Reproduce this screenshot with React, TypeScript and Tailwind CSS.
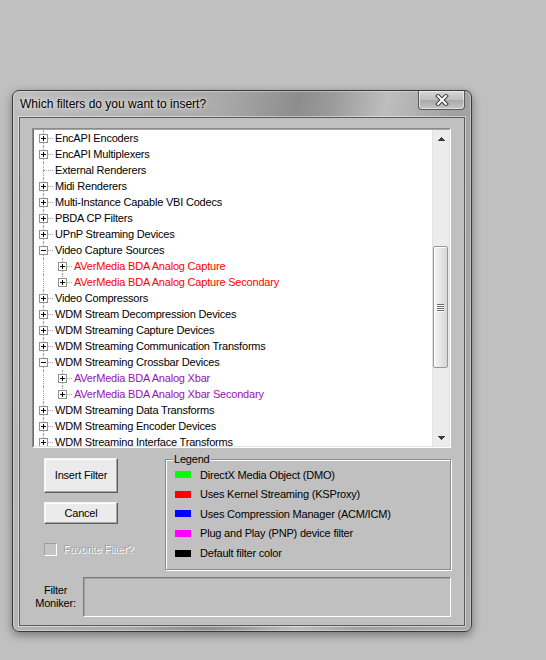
import React from "react";

type Box = "+" | "-" | null;
type Row = { label: string; level: 0 | 1; box: Box; color?: string; last?: boolean };

const rows: Row[] = [
  { label: "EncAPI Encoders", level: 0, box: "+" },
  { label: "EncAPI Multiplexers", level: 0, box: "+" },
  { label: "External Renderers", level: 0, box: null },
  { label: "Midi Renderers", level: 0, box: "+" },
  { label: "Multi-Instance Capable VBI Codecs", level: 0, box: "+" },
  { label: "PBDA CP Filters", level: 0, box: "+" },
  { label: "UPnP Streaming Devices", level: 0, box: "+" },
  { label: "Video Capture Sources", level: 0, box: "-" },
  { label: "AVerMedia BDA Analog Capture", level: 1, box: "+", color: "red" },
  { label: "AVerMedia BDA Analog Capture Secondary", level: 1, box: "+", color: "red", last: true },
  { label: "Video Compressors", level: 0, box: "+" },
  { label: "WDM Stream Decompression Devices", level: 0, box: "+" },
  { label: "WDM Streaming Capture Devices", level: 0, box: "+" },
  { label: "WDM Streaming Communication Transforms", level: 0, box: "+" },
  { label: "WDM Streaming Crossbar Devices", level: 0, box: "-" },
  { label: "AVerMedia BDA Analog Xbar", level: 1, box: "+", color: "purple" },
  { label: "AVerMedia BDA Analog Xbar Secondary", level: 1, box: "+", color: "purple", last: true },
  { label: "WDM Streaming Data Transforms", level: 0, box: "+" },
  { label: "WDM Streaming Encoder Devices", level: 0, box: "+" },
  { label: "WDM Streaming Interface Transforms", level: 0, box: "+" },
];

function ExpandBox({ kind }: { kind: "+" | "-" }) {
  return (
    <svg className="absolute left-[5px] top-[4px]" width="9" height="9" viewBox="0 0 9 9" shapeRendering="crispEdges">
      <rect x="0.5" y="0.5" width="8" height="8" fill="#fff" stroke="#919191" />
      <line x1="2" y1="4.5" x2="7" y2="4.5" stroke="#000" />
      {kind === "+" && <line x1="4.5" y1="2" x2="4.5" y2="7" stroke="#000" />}
    </svg>
  );
}

function Cell({ v, h, box }: { v: "full" | "top" | "none"; h: boolean; box: Box }) {
  return (
    <div className="relative h-[16px] w-[19px] shrink-0">
      {v === "full" && <div className="absolute left-[9px] top-0 h-[16px] border-l border-dotted border-[#a0a0a0]" />}
      {v === "top" && <div className="absolute left-[9px] top-0 h-[9px] border-l border-dotted border-[#a0a0a0]" />}
      {h && <div className="absolute left-[9px] top-[8px] w-[10px] border-t border-dotted border-[#a0a0a0]" />}
      {box && <ExpandBox kind={box} />}
    </div>
  );
}

function TreeRow({ r }: { r: Row }) {
  const color = r.color === "red" ? "text-[#ff0000]" : r.color === "purple" ? "text-[#9a10b4]" : "text-black";
  return (
    <div className="flex h-[16px] shrink-0 items-center whitespace-nowrap">
      {r.level === 0 ? (
        <Cell v="full" h box={r.box} />
      ) : (
        <>
          <Cell v="full" h={false} box={null} />
          <Cell v={r.last ? "top" : "full"} h box={r.box} />
        </>
      )}
      <span className={`ml-[2px] leading-[16px] ${color}`}>{r.label}</span>
    </div>
  );
}

function Scrollbar() {
  return (
    <div className="flex w-[17px] shrink-0 flex-col border-l border-[#e2e2e2] bg-[#ececec]">
      <div className="flex h-[17px] items-center justify-center">
        <svg width="7" height="4" viewBox="0 0 7 4" shapeRendering="crispEdges">
          <path d="M3.5 0 L7 4 L0 4 Z" fill="#3c3c3c" />
        </svg>
      </div>
      <div className="flex-1">
        <div className="mr-[1px] mt-[99px] flex h-[122px] flex-col items-center justify-center gap-[1px] rounded-[2px] border border-[#979797] bg-[linear-gradient(90deg,#f6f6f6,#e6e6e6_50%,#d6d6d6)] shadow-[inset_1px_1px_0_#fff]">
          <div className="h-[1px] w-[7px] bg-[#6a6a6a] shadow-[0_1px_0_#fff]" />
          <div className="h-[1px] w-[7px] bg-[#6a6a6a] shadow-[0_1px_0_#fff]" />
          <div className="h-[1px] w-[7px] bg-[#6a6a6a] shadow-[0_1px_0_#fff]" />
          <div className="h-[1px] w-[7px] bg-[#6a6a6a] shadow-[0_1px_0_#fff]" />
        </div>
      </div>
      <div className="flex h-[17px] items-center justify-center">
        <svg width="7" height="4" viewBox="0 0 7 4" shapeRendering="crispEdges">
          <path d="M0 0 L7 0 L3.5 4 Z" fill="#3c3c3c" />
        </svg>
      </div>
    </div>
  );
}

const legend = [
  { c: "bg-[#00ff00]", t: "DirectX Media Object (DMO)" },
  { c: "bg-[#ff0000]", t: "Uses Kernel Streaming (KSProxy)" },
  { c: "bg-[#0000ff]", t: "Uses Compression Manager (ACM/ICM)" },
  { c: "bg-[#ff00ff]", t: "Plug and Play (PNP) device filter" },
  { c: "bg-[#000000]", t: "Default filter color" },
];

export default function App() {
  return (
    <div className="h-[660px] w-[546px] overflow-hidden bg-[#c0c0c0] pl-[12px] pt-[90px] font-['Liberation_Sans',Arial,sans-serif] text-[11px] tracking-[-0.2px] text-black">
      <div className="flex h-[542px] w-[460px] flex-col rounded-[7px] border border-[#3a3a3a] bg-[linear-gradient(100deg,#bdbdbd_0%,#aaaaaa_38%,#8d8d8d_52%,#9b9b9b_58%,#bebebe_68%,#a1a1a1_80%,#ababab_100%)] shadow-[0_3px_10px_rgba(0,0,0,0.4),inset_0_0_0_1px_rgba(255,255,255,0.35)]">
        {/* title bar */}
        <div className="flex h-[26px] shrink-0 items-start justify-between pl-[7px] pr-[6px]">
          <div className="mt-[6px] text-[12px] leading-[15px] tracking-normal text-black [text-shadow:0_0_8px_rgba(255,255,255,0.9),0_0_3px_rgba(255,255,255,0.7)]">
            Which filters do you want to insert?
          </div>
          <div className="flex h-[19px] w-[47px] items-center justify-center rounded-b-[4px] border border-t-0 border-[#5a5a5a] bg-[linear-gradient(180deg,#d6d6d6,#bdbdbd_50%,#a9a9a9_51%,#c4c4c4)] shadow-[inset_0_0_0_1px_rgba(255,255,255,0.5)]">
            <svg width="14" height="12" viewBox="0 0 14 12">
              <path d="M3 2 L11 10 M11 2 L3 10" stroke="#3b3b3b" strokeWidth="4" strokeLinecap="square" />
              <path d="M3 2 L11 10 M11 2 L3 10" stroke="#ffffff" strokeWidth="2" strokeLinecap="square" />
            </svg>
          </div>
        </div>

        {/* client area */}
        <div className="mx-[6px] mb-[5px] flex flex-1 flex-col border border-[#5c5c5c] bg-[#c0c0c0] shadow-[0_0_0_1px_rgba(255,255,255,0.45)]">
          {/* tree view */}
          <div className="ml-[12px] mt-[10px] h-[320px] w-[419px] border border-b-white border-l-[#8a8a8a] border-r-white border-t-[#8a8a8a]">
            <div className="flex h-full w-full border border-b-[#e4e4e4] border-l-[#6c6c6c] border-r-[#e4e4e4] border-t-[#a6a6a6] bg-white">
              <div className="flex flex-1 flex-col overflow-hidden">
                {rows.map((r, i) => (
                  <TreeRow key={i} r={r} />
                ))}
              </div>
              <Scrollbar />
            </div>
          </div>

          {/* buttons + legend */}
          <div className="mt-[10px] flex pl-[24px]">
            <div className="flex w-[74px] flex-col">
              <button className="flex h-[35px] w-[74px] items-center justify-center border border-b-[#5e5e5e] border-l-[#f4f4f4] border-r-[#5e5e5e] border-t-[#f4f4f4] bg-[#ebebeb] text-[11px] text-black shadow-[inset_-1px_-1px_0_#a6a6a6,inset_1px_1px_0_#ffffff]">
                Insert Filter
              </button>
              <button className="mt-[9px] flex h-[22px] w-[74px] items-center justify-center border border-b-[#5e5e5e] border-l-[#f4f4f4] border-r-[#5e5e5e] border-t-[#f4f4f4] bg-[#ebebeb] text-[11px] text-black shadow-[inset_-1px_-1px_0_#a6a6a6,inset_1px_1px_0_#ffffff]">
                Cancel
              </button>
              <div className="mt-[17px] flex items-center whitespace-nowrap">
                <div className="h-[13px] w-[13px] shrink-0 border border-b-white border-l-[#9c9c9c] border-r-white border-t-[#9c9c9c] bg-[#c4c4c4]" />
                <span className="ml-[6px] text-[#a4a4a4] [text-shadow:1px_1px_0_#ffffff]">Favorite Filter?</span>
              </div>
            </div>

            <div className="relative ml-[47px] mt-[1px] h-[111px] w-[286px] border border-[#8c8c8c] pl-[9px] pt-[5px] shadow-[inset_1px_1px_0_#ffffff,1px_1px_0_#ffffff]">
              <span className="absolute left-[7px] top-[-8px] bg-[#c0c0c0] px-[1px] leading-[14px]">Legend</span>
              {legend.map((l) => (
                <div key={l.t} className="flex h-[19.6px] items-center whitespace-nowrap">
                  <div className={`h-[7px] w-[16px] shrink-0 ${l.c}`} />
                  <span className="ml-[9px]">{l.t}</span>
                </div>
              ))}
            </div>
          </div>

          {/* moniker */}
          <div className="mt-[7px] flex items-center pl-[15px]">
            <div className="w-[41px] text-center leading-[13px]">
              Filter
              <br />
              Moniker:
            </div>
            <div className="ml-[7px] h-[40px] w-[368px] border border-b-white border-l-[#7c7c7c] border-r-white border-t-[#7c7c7c] bg-[#c0c0c0] shadow-[inset_1px_1px_0_#a2a2a2]" />
          </div>
        </div>
      </div>
    </div>
  );
}
